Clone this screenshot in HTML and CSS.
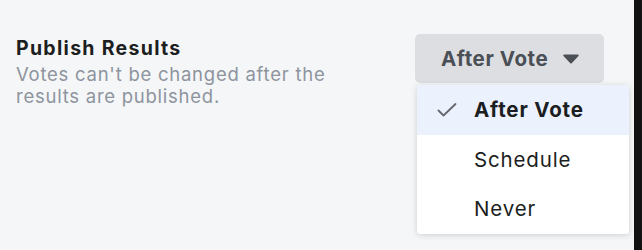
FILE: index.html
```html
<!DOCTYPE html>
<html>
<head>
<meta charset="utf-8">
<link rel="stylesheet" href="styles.css">
</head>
<body>
<div class="page">
  <main class="content">
    <div class="setting">
      <div class="label">
        <div class="title">Publish Results</div>
        <div class="desc">Votes can't be changed after the results are published.</div>
      </div>
      <div class="select">
        <button class="select-btn">
          <span>After Vote</span>
          <svg class="caret" width="16" height="10" viewBox="0 0 16 10"><path d="M1.2 0.5h13.6a0.9 0.9 0 0 1 0.7 1.5L8.7 9.2a1 1 0 0 1-1.4 0L0.5 2a0.9 0.9 0 0 1 0.7-1.5z" fill="#4b4f56"/></svg>
        </button>
        <ul class="menu">
          <li class="item selected">
            <svg class="check" width="20" height="14" viewBox="0 0 20 14"><path d="M1.5 7.5l5 5L18.5 1" fill="none" stroke="#65676b" stroke-width="1.8" stroke-linecap="round" stroke-linejoin="round"/></svg>
            <span>After Vote</span>
          </li>
          <li class="item"><span>Schedule</span></li>
          <li class="item"><span>Never</span></li>
        </ul>
      </div>
    </div>
  </main>
  <div class="edge"></div>
</div>
</body>
</html>
```
FILE: styles.css
```css
html, body {
  margin: 0;
  padding: 0;
  height: 100%;
}
body {
  font-family: Inter, "Noto Sans", "Liberation Sans", sans-serif;
  background: #f5f6f7;
}
.page {
  display: flex;
  height: 250px;
}
.content {
  flex: 1;
  padding: 34px 0 0 16px;
  box-sizing: border-box;
}
.edge {
  width: 8px;
  background: #121212;
}
.setting {
  display: flex;
  justify-content: space-between;
  align-items: flex-start;
  width: 588px;
}
.label {
  padding-top: 2px;
  width: 340px;
}
.title {
  font-size: 19.5px;
  font-weight: 700;
  color: #1c1e21;
  line-height: 24px;
  letter-spacing: 1.3px;
}
.desc {
  margin-top: 3px;
  font-size: 18.5px;
  color: #8d949e;
  line-height: 22px;
  letter-spacing: 0.75px;
}
.select {
  position: relative;
}
.select-btn {
  display: flex;
  align-items: center;
  gap: 15px;
  height: 49px;
  width: 189px;
  padding: 0 0 0 26px;
  box-sizing: border-box;
  border: none;
  border-radius: 5px;
  background: #dcdee2;
  font-family: inherit;
  font-size: 20.5px;
  font-weight: 700;
  color: #4b4f56;
  letter-spacing: 0.6px;
}
.caret {
  display: block;
}
.menu {
  position: absolute;
  top: 51px;
  left: 2px;
  width: 212px;
  margin: 0;
  padding: 0;
  list-style: none;
  background: #fff;
  border-radius: 3px;
  box-shadow: 0 1px 6px rgba(0, 0, 0, 0.16);
  overflow: hidden;
}
.item {
  display: flex;
  align-items: center;
  height: 49.5px;
  padding-left: 57px;
  font-size: 20.5px;
  color: #1c1e21;
  letter-spacing: 0.85px;
  position: relative;
}
.item.selected {
  background: #ebf1fd;
  font-weight: 700;
}
.check {
  position: absolute;
  left: 20px;
  top: 18px;
}
```
